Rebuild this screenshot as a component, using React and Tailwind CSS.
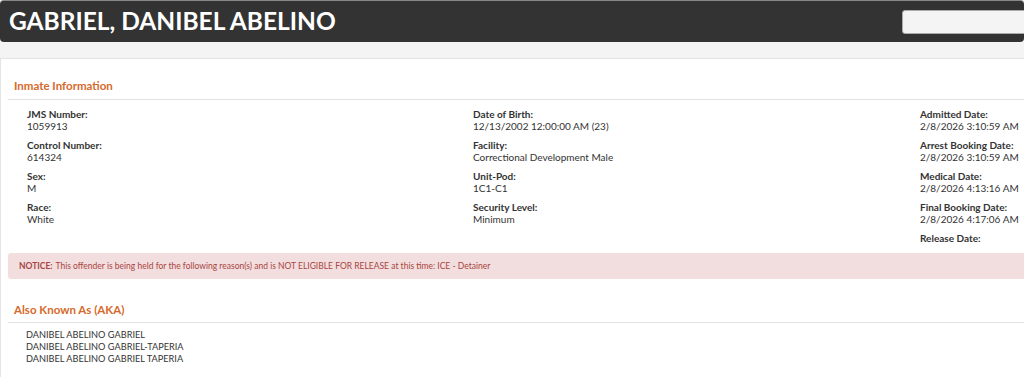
import React from "react";

const col1 = [
  ["JMS Number:", "1059913"],
  ["Control Number:", "614324"],
  ["Sex:", "M"],
  ["Race:", "White"],
];
const col2 = [
  ["Date of Birth:", "12/13/2002 12:00:00 AM (23)"],
  ["Facility:", "Correctional Development Male"],
  ["Unit-Pod:", "1C1-C1"],
  ["Security Level:", "Minimum"],
];
const col3 = [
  ["Admitted Date:", "2/8/2026 3:10:59 AM"],
  ["Arrest Booking Date:", "2/8/2026 3:10:59 AM"],
  ["Medical Date:", "2/8/2026 4:13:16 AM"],
  ["Final Booking Date:", "2/8/2026 4:17:06 AM"],
  ["Release Date:", ""],
];

function Field({ label, value }) {
  return (
    <div className="h-[31px] whitespace-nowrap text-[10px] leading-[12px]">
      <div className="font-bold">{label}</div>
      <div>{value}</div>
    </div>
  );
}

export default function App() {
  return (
    <div className="min-h-[377px] overflow-hidden bg-[#f4f4f4] font-['Lato',sans-serif] text-[#333]">
      <div className="flex h-[42px] items-center justify-between overflow-hidden rounded-[4px] border-t border-[#888] bg-[#333] pl-[9px]">
        <h1 className="text-[24.5px] font-bold leading-none text-white">GABRIEL, DANIBEL ABELINO</h1>
        <div className="-mr-[12px] h-[24px] w-[134px] shrink-0 rounded-[3px] border border-[#aaa] bg-[#f4f4f4]" />
      </div>
      <div className="mt-[16px] min-h-[319px] border-l border-t border-[#e4e4e4] bg-white pl-[7px] pt-[20px]">
        <h2 className="pl-[6px] text-[11.5px] font-bold leading-[14px] text-[#d7692b]">Inmate Information</h2>
        <div className="mt-[6px] h-px bg-[#e2e2e2]" />
        <div className="grid grid-cols-[446px_447px_1fr] pl-[19px] pt-[8px]">
          <div>{col1.map(([l, v]) => <Field key={l} label={l} value={v} />)}</div>
          <div>{col2.map(([l, v]) => <Field key={l} label={l} value={v} />)}</div>
          <div>{col3.map(([l, v]) => <Field key={l} label={l} value={v} />)}</div>
        </div>
        <div className="mt-[-10px] flex h-[26px] items-center whitespace-nowrap rounded-l-[3px] bg-[#f2dede] pl-[11px] text-[8.5px] text-[#a94442]">
          <span className="font-bold">NOTICE:</span>
          <span className="ml-[3px]">This offender is being held for the following reason(s) and is NOT ELIGIBLE FOR RELEASE at this time: ICE - Detainer</span>
        </div>
        <h2 className="mt-[24px] pl-[6px] text-[11.5px] font-bold leading-[14px] text-[#d7692b]">Also Known As (AKA)</h2>
        <div className="mt-[5px] h-px bg-[#e2e2e2]" />
        <div className="pl-[18px] pt-[6px] text-[9.2px] leading-[12px]">
          <div>DANIBEL ABELINO GABRIEL</div>
          <div>DANIBEL ABELINO GABRIEL-TAPERIA</div>
          <div>DANIBEL ABELINO GABRIEL TAPERIA</div>
        </div>
      </div>
    </div>
  );
}
